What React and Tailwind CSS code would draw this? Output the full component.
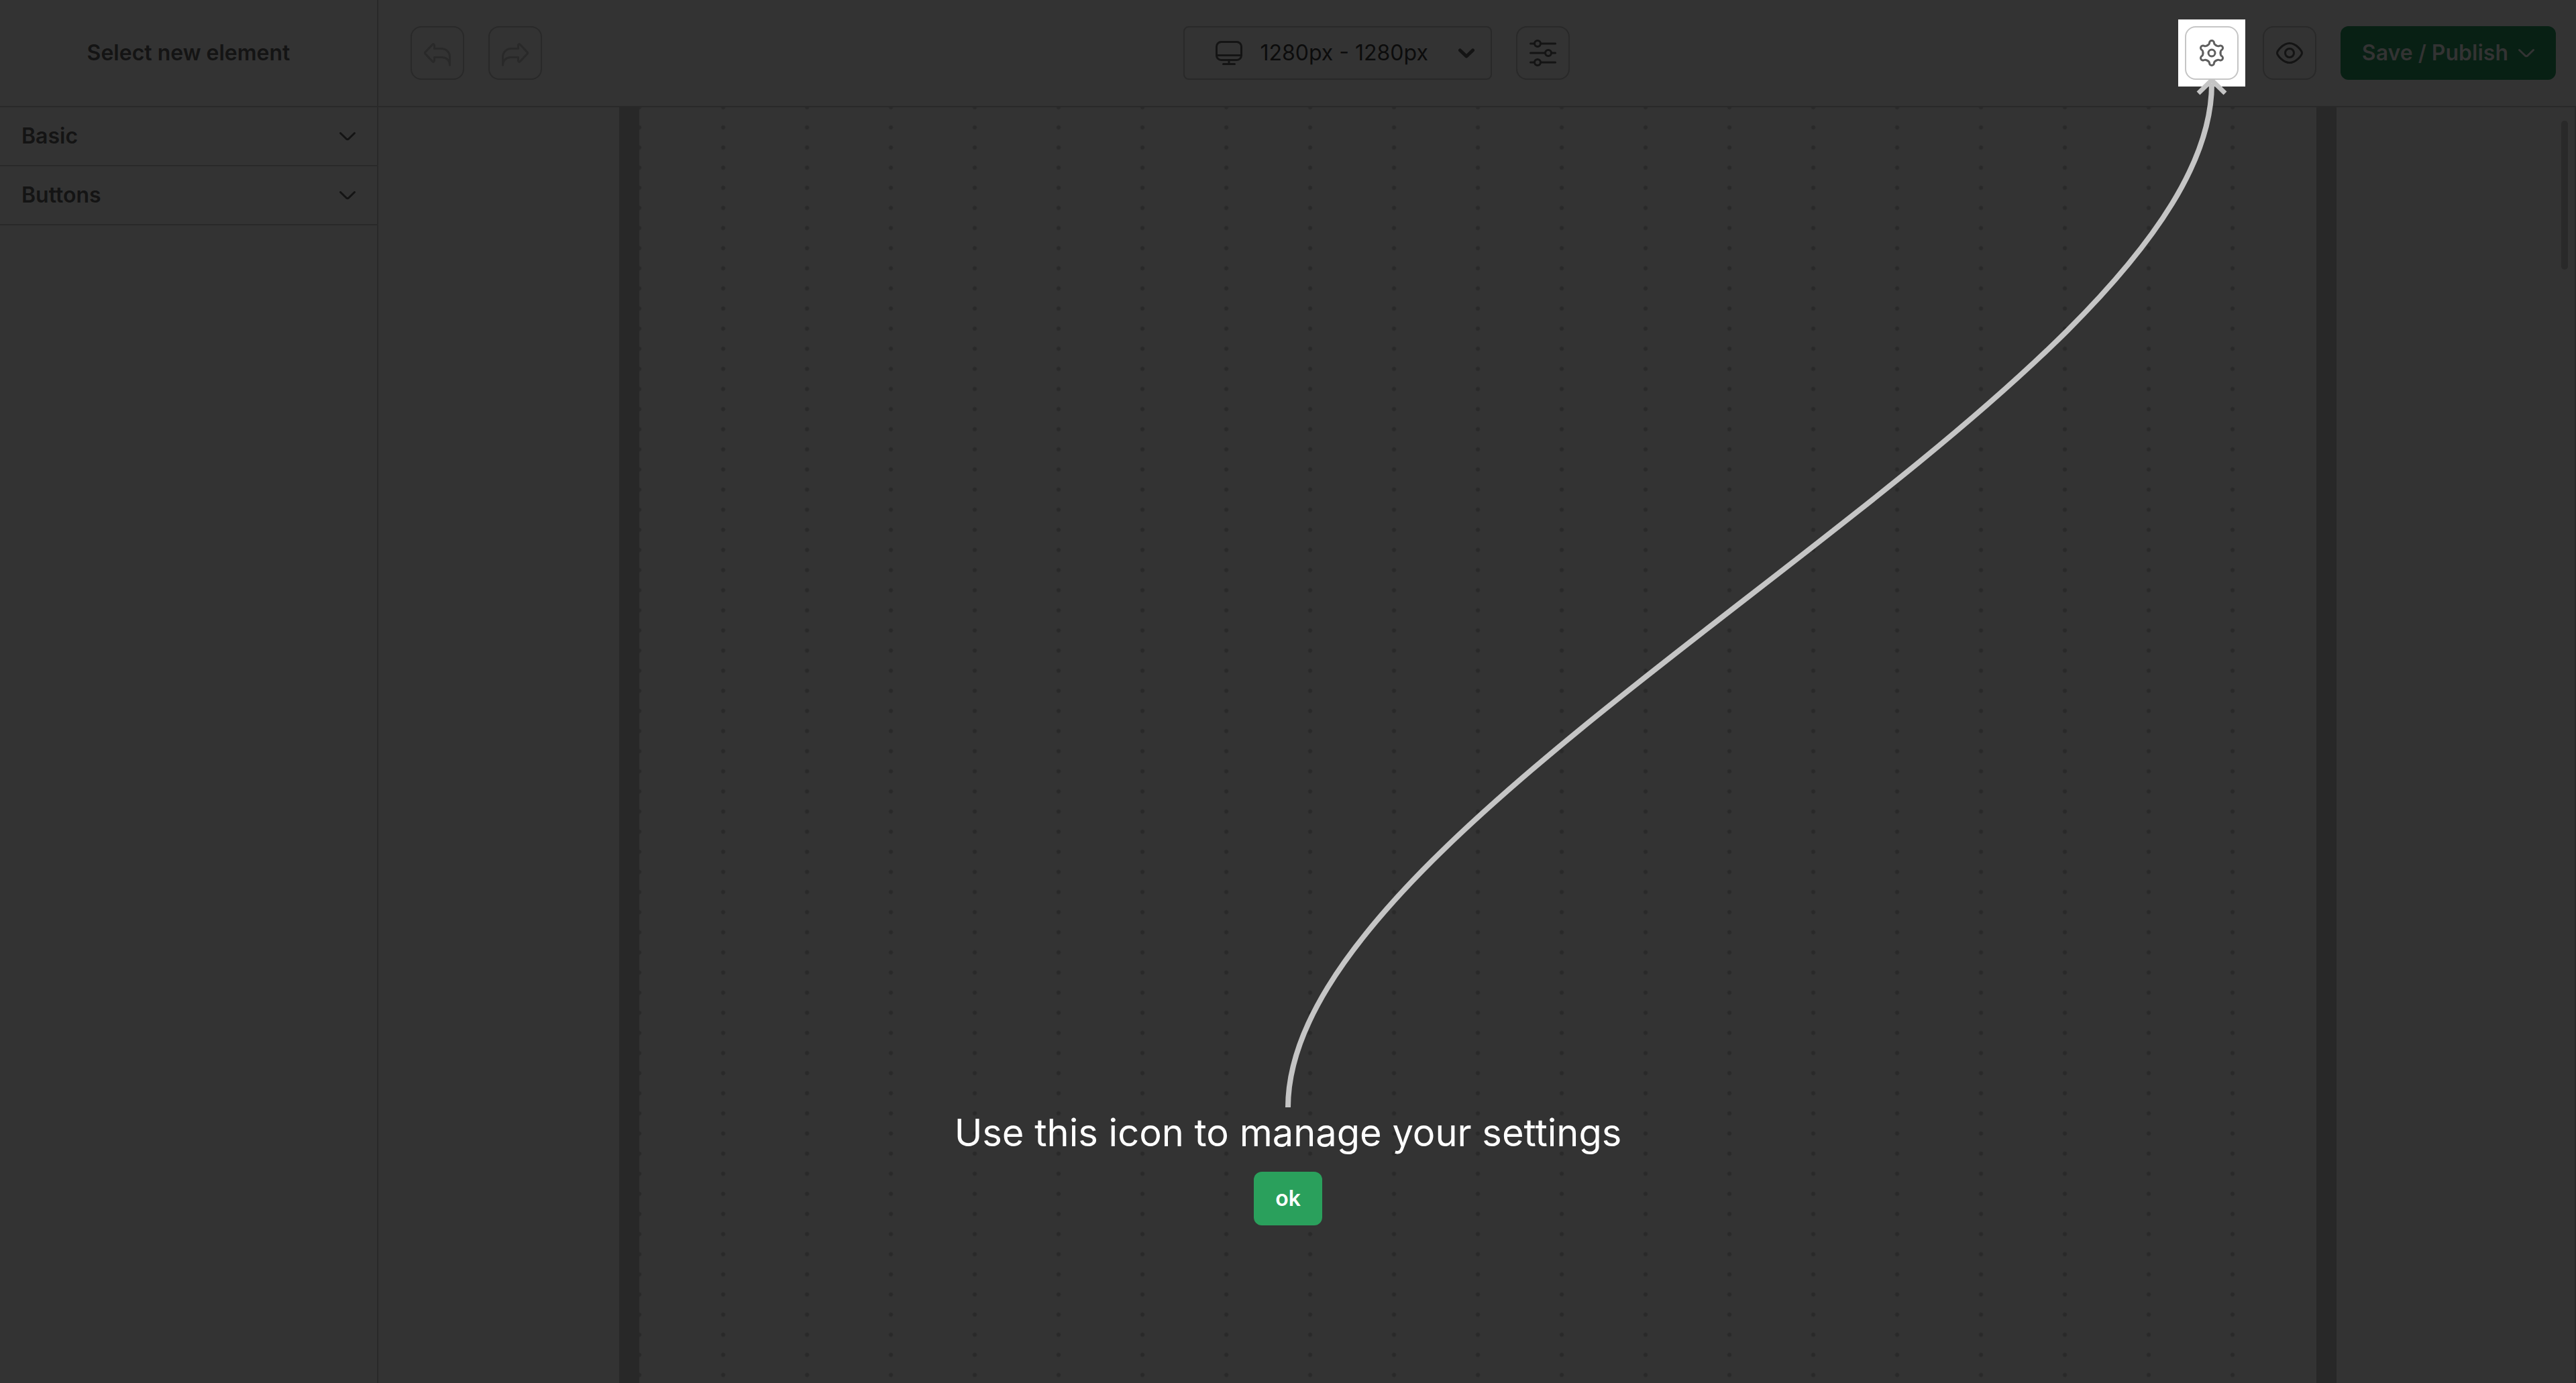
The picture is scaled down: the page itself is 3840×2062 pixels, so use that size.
import React from "react";

const stroke = {
  fill: "none",
  stroke: "currentColor",
  strokeWidth: 3,
  strokeLinecap: "round",
  strokeLinejoin: "round",
};

function Icon({ className = "size-10", box = "0 0 40 40", children, ...rest }) {
  return (
    <svg viewBox={box} className={`shrink-0 ${className}`} aria-hidden="true" {...stroke} {...rest}>
      {children}
    </svg>
  );
}

const ARROW =
  "M2 21.2 Q1 20 2 18.8 L12.6 7.4 C13.7 6.3 15.5 7 15.5 8.5 V13.5 H26 C33 13.5 38.5 19 38.5 26 V38 C38.5 31 33.5 26.5 27 26.5 H15.5 V31.5 C15.5 33 13.7 33.7 12.6 32.6 Z";

const UndoIcon = () => (
  <Icon>
    <path d={ARROW} />
  </Icon>
);

const RedoIcon = () => (
  <Icon>
    <path d={ARROW} transform="matrix(-1 0 0 1 40 0)" />
  </Icon>
);

const MonitorIcon = () => (
  <Icon>
    <rect x="1.5" y="3.5" width="37" height="27" rx="7" />
    <path d="M1.5 23.5 H38.5 M20 30.5 V36.5 M11.5 36.5 H28.5" />
  </Icon>
);

const SlidersIcon = () => (
  <Icon>
    <path d="M1.5 6 H7.5 M16.5 6 H38.5 M1.5 20 H23.5 M32.5 20 H38.5 M1.5 34 H7.5 M16.5 34 H38.5" />
    <circle cx="12" cy="6" r="4.5" />
    <circle cx="28" cy="20" r="4.5" />
    <circle cx="12" cy="34" r="4.5" />
  </Icon>
);

const GearIcon = () => (
  <Icon>
    {[0, 60, 120, 180, 240, 300].map((angle) => (
      <path
        key={angle}
        transform={`rotate(${angle} 20 20)`}
        d="M13.5 8.7 C15.4 7.6 16.5 7 16.5 5 A3.5 3.5 0 0 1 23.5 5 C23.5 7 24.6 7.6 26.5 8.7"
      />
    ))}
    <circle cx="20" cy="20" r="5" />
  </Icon>
);

const EyeIcon = () => (
  <Icon>
    <path d="M1.5 20 C1.5 17 10 5.5 20 5.5 S38.5 17 38.5 20 S30 34.5 20 34.5 S1.5 23 1.5 20 Z" />
    <circle cx="20" cy="20" r="6.5" />
  </Icon>
);

const Chevron = () => (
  <Icon className="h-4 w-6" box="0 0 24 16">
    <path d="M1.5 3.5 L10 11.8 Q12 13.6 14 11.8 L22.5 3.5" />
  </Icon>
);

function IconButton({ label, className = "border-[#292929] text-[#141414]", children }) {
  return (
    <button
      type="button"
      aria-label={label}
      className={`flex size-20 shrink-0 items-center justify-center rounded-2xl border-2 ${className}`}
    >
      {children}
    </button>
  );
}

function Section({ title }) {
  return (
    <button
      type="button"
      className="flex h-22 w-full items-center justify-between border-b-2 border-[#292929] px-8 font-semibold"
    >
      {title}
      <Chevron />
    </button>
  );
}

export default function App() {
  return (
    <div className="relative flex min-h-screen flex-col overflow-hidden bg-[#333333] font-['Inter',sans-serif] text-[32px] leading-10 text-[#141414]">
      <header className="flex h-40 border-b-2 border-[#292929]">
        <div className="flex w-[564px] shrink-0 items-center justify-center border-r-2 border-[#292929] font-semibold">
          <h2>Select new element</h2>
        </div>
        <div className="flex flex-1 items-center justify-between pr-[30px] pl-12">
          <div className="flex gap-9 pr-10">
            <IconButton label="Undo" className="border-[#292929] text-[#292929]">
              <UndoIcon />
            </IconButton>
            <IconButton label="Redo" className="border-[#292929] text-[#292929]">
              <RedoIcon />
            </IconButton>
          </div>
          <div className="flex gap-9">
            <label className="flex h-20 w-[460px] items-center rounded-lg border-2 border-[#292929] pr-6 pl-[46px]">
              <MonitorIcon />
              <select
                aria-label="Screen size"
                className="ml-[26px] flex-1 appearance-none bg-transparent text-[#0c0c0c] outline-none"
              >
                <option>1280px - 1280px</option>
              </select>
              <Icon className="h-4 w-6" box="0 0 24 16" strokeWidth="5">
                <path d="M2.5 4 L12 13 L21.5 4" />
              </Icon>
            </label>
            <IconButton label="Adjust breakpoints">
              <SlidersIcon />
            </IconButton>
          </div>
          <div className="flex items-center gap-9">
            <div className="-m-[10px] bg-white p-[10px]">
              <IconButton label="Settings" className="border-[#c5c5c5] bg-white text-[#5f5f5f]">
                <GearIcon />
              </IconButton>
            </div>
            <IconButton label="Preview">
              <EyeIcon />
            </IconButton>
            <button
              type="button"
              className="flex h-20 items-center gap-[15px] rounded-xl bg-[#082014] px-8 font-semibold text-[#333333]"
            >
              Save / Publish
              <Chevron />
            </button>
          </div>
        </div>
      </header>

      <div className="flex flex-1">
        <aside className="w-[564px] shrink-0 border-r-2 border-[#292929]">
          <Section title="Basic" />
          <Section title="Buttons" />
        </aside>
        <main className="relative flex flex-1 justify-center border-r-2 border-[#292929] pl-1">
          <div className="w-full max-w-[2560px] border-x-[30px] border-[#282828] bg-[radial-gradient(circle_at_62px_15px,#292929_2px,transparent_4px)] bg-[length:125px_30px] bg-[position:-62px_-15px] bg-clip-content pr-1" />
          <div className="absolute top-5 right-[10px] h-[222px] w-[10px] rounded-full bg-[#292929]" />
        </main>
      </div>

      <svg
        viewBox="0 0 3840 2062"
        className="pointer-events-none absolute inset-0 size-full"
        fill="none"
        stroke="#c5c5c5"
        aria-hidden="true"
      >
        <path d="M1920 1651 C1920 1191 3297 585 3297 125" strokeWidth="8" />
        <path d="M3277 139 L3297 119.5 L3317 139" strokeWidth="7" strokeLinejoin="bevel" />
      </svg>

      <div
        role="dialog"
        aria-label="Settings hint"
        className="absolute inset-x-0 bottom-[235px] flex flex-col items-center gap-6 text-white"
      >
        <p className="text-[56px] leading-[68px]">Use this icon to manage your settings</p>
        <button type="button" className="h-20 rounded-xl bg-[#2aa05c] px-8 font-semibold">
          ok
        </button>
      </div>
    </div>
  );
}
